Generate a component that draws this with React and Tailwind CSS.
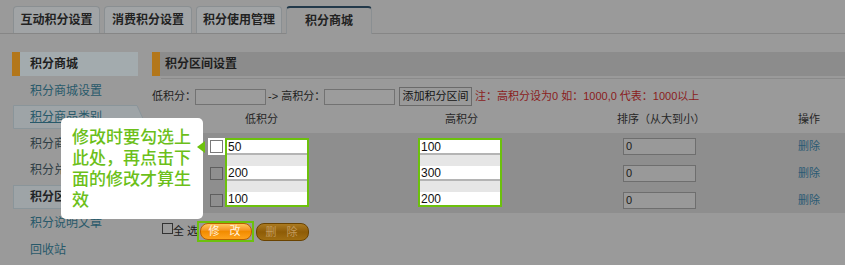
import React from 'react'

const tabs = [
    { label: '互动积分设置', w: 'w-[87px]' },
    { label: '消费积分设置', w: 'w-[88px]' },
    { label: '积分使用管理', w: 'w-[86px]' },
]

const menu = [
    { label: '积分商城设置', tone: 'text-[#28596a]' },
    { label: '积分商品类别', tone: 'text-[#28596a] underline', boxed: 'slant' },
    { label: '积分商品管理', tone: 'text-[#2f3e45]' },
    { label: '积分兑换记录', tone: 'text-[#2f3e45]' },
    { label: '积分区间设置', tone: 'text-[#1f2326] font-bold', boxed: 'plain' },
    { label: '积分说明文章', tone: 'text-[#28596a]' },
    { label: '回收站', tone: 'text-[#28596a]' },
]

const ranges = [
    { low: '50', high: '100', sort: '0' },
    { low: '200', high: '300', sort: '0' },
    { low: '100', high: '200', sort: '0' },
]

const Checkbox = ({ lit }) => (
    <span
        className={
            lit
                ? 'block h-[13px] w-[13px] border border-[#7a7a7a] bg-white'
                : 'block h-[13px] w-[13px] border border-[#5e5e5e] bg-[#8f8f8f]'
        }
    />
)

const HighlightColumn = ({ values }) => (
    <div className="flex h-[69px] w-[84px] flex-col gap-[11px] border-2 border-[#6cc10c] bg-[#e6e6e6]">
        {values.map((v, i) => (
            <div
                key={i}
                className={
                    i < values.length - 1
                        ? 'flex h-[15px] items-center border-b-2 border-[#b4b4b4] bg-white pl-[1px] text-[12px] leading-none text-[#111]'
                        : 'flex h-[13px] items-center bg-white pl-[1px] text-[12px] leading-none text-[#111]'
                }
            >
                {v}
            </div>
        ))}
    </div>
)

const App = () => {
    return (
        <div className="relative h-[265px] w-[845px] overflow-hidden bg-[#9a9a9a] font-['Liberation_Sans','Noto_Sans_CJK_SC',sans-serif] text-[#1e1e1e]">
            {/* tabs */}
            <div className="flex h-[34px] items-end gap-[4px] border-b border-[#868686] pl-[13px]">
                {tabs.map((t) => (
                    <div
                        key={t.label}
                        className={`${t.w} flex h-[27px] items-center justify-center rounded-t-[4px] border border-b-0 border-[#8a8f92] bg-[#a1a4a6] text-[12px] font-bold leading-none text-[#222]`}
                    >
                        {t.label}
                    </div>
                ))}
                <div className="-mb-px flex h-[28px] w-[86px] items-center justify-center rounded-t-[4px] border border-b-0 border-[#8a8f92] border-t-2 border-t-[#22394a] bg-[#9a9a9a] text-[12px] font-bold leading-none text-[#222]">
                    积分商城
                </div>
            </div>

            <div className="flex pt-[18px]">
                {/* side menu */}
                <div className="ml-[12px] flex w-[126px] shrink-0 flex-col gap-[2.5px] text-[12px] leading-none">
                    <div className="flex h-[24px] items-center bg-[#a3abae]">
                        <div className="h-full w-[8px] bg-[#b3771b]" />
                        <span className="ml-[10px] font-bold text-[#1f1f1f]">积分商城</span>
                    </div>
                    {menu.map((m) => (
                        <div key={m.label} className="relative flex h-[24px] items-center">
                            {m.boxed === 'slant' && (
                                <svg className="absolute left-[1px] top-0" width="135" height="24" viewBox="0 0 135 24">
                                    <path d="M0.5 0.5 H124 L134.5 23.5 H0.5 Z" fill="#9ea4a7" stroke="#8a959a" />
                                </svg>
                            )}
                            {m.boxed === 'plain' && (
                                <div className="absolute inset-y-0 left-[1px] w-[134px] border border-[#8a959a] bg-[#9ea4a7]" />
                            )}
                            <span className={`relative ml-[18px] whitespace-nowrap ${m.tone}`}>{m.label}</span>
                        </div>
                    ))}
                </div>

                {/* main panel */}
                <div className="ml-[14px] flex-1">
                    <div className="flex h-[24px] items-center bg-[#8c8c8c]">
                        <div className="h-full w-[8px] bg-[#b3771b]" />
                        <span className="ml-[5px] text-[12px] font-bold leading-none text-[#1f1f1f]">积分区间设置</span>
                    </div>
                    <div className="ml-[9px] mt-[2px] h-px bg-[#8a8a8a]" />

                    <div className="mt-[8px] flex h-[19px] items-center whitespace-nowrap text-[11px] leading-none">
                        <span className="w-[43px]">低积分：</span>
                        <span className="h-[16px] w-[71px] border border-[#727272] bg-[#9c9c9c]" />
                        <span className="ml-[2px] w-[56px]">-&gt; 高积分：</span>
                        <span className="h-[16px] w-[71px] border border-[#727272] bg-[#9c9c9c]" />
                        <span className="ml-[4px] flex h-[19px] w-[73px] items-center justify-center border border-[#6a6a6a] bg-[#9a9a9a] text-[#141414]">
                            添加积分区间
                        </span>
                        <span className="ml-[3px] text-[#8a1c1c]">注：高积分设为0 如：1000,0 代表：1000以上</span>
                    </div>

                    <div className="flex h-[27px] items-center whitespace-nowrap text-[11px] leading-none text-[#262626]">
                        <span className="ml-[93px] w-[200px]">低积分</span>
                        <span className="w-[172px]">高积分</span>
                        <span className="w-[181px]">排序（从大到小）</span>
                        <span>操作</span>
                    </div>

                    <div className="flex h-[80px] items-start bg-[#8e8e8e] pt-[5px]">
                        <div className="flex w-[73px] flex-col items-end gap-[10px]">
                            {ranges.map((r, i) => (
                                <div
                                    key={i}
                                    className={
                                        i === 0
                                            ? 'flex h-[17px] w-[17px] items-center justify-center bg-white'
                                            : 'flex h-[17px] w-[17px] items-center justify-center'
                                    }
                                >
                                    <Checkbox lit={i === 0} />
                                </div>
                            ))}
                        </div>
                        <HighlightColumn values={ranges.map((r) => r.low)} />
                        <div className="w-[109px]" />
                        <HighlightColumn values={ranges.map((r) => r.high)} />
                        <div className="w-[121px]" />
                        <div className="flex w-[73px] flex-col gap-[10px]">
                            {ranges.map((r, i) => (
                                <div
                                    key={i}
                                    className="flex h-[17px] items-center border border-[#6e6e6e] bg-[#999] pl-[2px] text-[11px] leading-none text-[#1a1a1a]"
                                >
                                    {r.sort}
                                </div>
                            ))}
                        </div>
                        <div className="w-[102px]" />
                        <div className="flex flex-col gap-[10px]">
                            {ranges.map((r, i) => (
                                <div key={i} className="flex h-[17px] items-center text-[11px] leading-none text-[#2a5a73]">
                                    删除
                                </div>
                            ))}
                        </div>
                    </div>

                    <div className="mt-[8px] flex items-start whitespace-nowrap">
                        <span className="ml-[10px] mt-[2px] block h-[11px] w-[11px] border border-[#333] bg-[#9a9a9a]" />
                        <span className="mt-[5px] w-[24px] text-[11px] leading-none text-[#1a1a1a]">全 选</span>
                        <div className="flex h-[21px] w-[57px] items-center justify-center border-2 border-[#6cc10c]">
                            <div className="flex h-[17px] w-[52px] items-center justify-center rounded-[8px] border border-[#b95f00] bg-gradient-to-b from-[#ffc65a] via-[#f28c00] to-[#ffa31a] pl-[8px] text-[11px] leading-none tracking-[10px] text-[#fff6e2]">
                                修改
                            </div>
                        </div>
                        <div className="ml-[2px] mt-[2px] flex h-[18px] w-[53px] items-center justify-center rounded-[8px] border border-[#6a4300] bg-gradient-to-b from-[#aa7a20] via-[#8e5c06] to-[#a06e12] pl-[8px] text-[11px] leading-none tracking-[10px] text-[#c29a5c]">
                            删除
                        </div>
                    </div>
                </div>
            </div>

            {/* hint bubble */}
            <div className="absolute left-[61px] top-[118px] z-10 h-[101px] w-[142px] whitespace-nowrap rounded-[5px] bg-white pl-[11px] pt-[9px] text-[17px] font-medium leading-[21px] text-[#6cbf1a]">
                修改时要勾选上
                <br />
                此处，再点击下
                <br />
                面的修改才算生
                <br />
                效
            </div>
            <div className="absolute left-[197px] top-[141px] z-10 h-0 w-0 border-y-[6px] border-r-[8px] border-y-transparent border-r-[#6cc10c]" />
        </div>
    )
}

export default App
